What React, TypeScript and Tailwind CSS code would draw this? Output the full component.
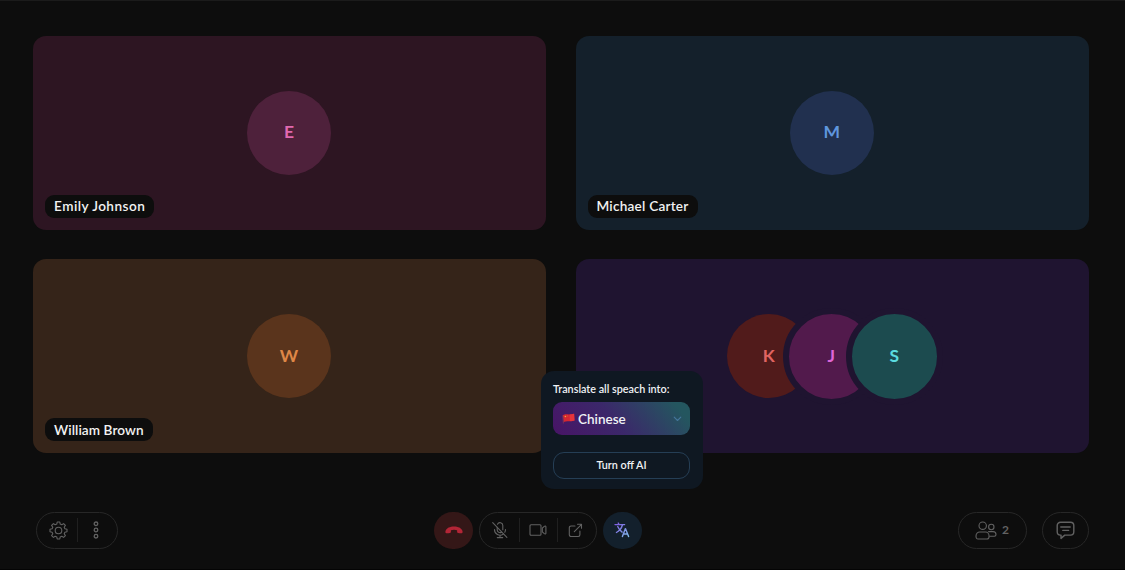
import React from 'react';
import clsx from 'clsx';

interface TileProps {
  name?: string;
  labelClassName?: string;
  className: string;
  children: React.ReactNode;
}

const Tile: React.FC<TileProps> = ({ name, labelClassName, className, children }) => (
  <div
    className={clsx(
      'relative flex items-center justify-center rounded-[13px] pr-px pb-[0.5px]',
      className
    )}
  >
    {children}
    {name && (
      <span
        className={clsx(
          'absolute bottom-3 left-3 flex h-[23px] items-center rounded-[9px] bg-[#0d0d0d] pl-[9px] text-[13.6px] font-semibold whitespace-nowrap text-[#f2f2f2]',
          labelClassName
        )}
      >
        {name}
      </span>
    )}
  </div>
);

interface AvatarProps {
  letter: string;
  className: string;
}

const Avatar: React.FC<AvatarProps> = ({ letter, className }) => (
  <div
    className={clsx(
      'flex shrink-0 items-center justify-center rounded-full pb-px text-[17.5px] font-bold',
      className
    )}
  >
    {letter}
  </div>
);

const Divider: React.FC = () => <span className="h-6 w-px bg-[#202020]" />;

const iconProps = {
  fill: 'none',
  stroke: 'currentColor',
  strokeWidth: 1.1,
  strokeLinecap: 'round' as const,
  strokeLinejoin: 'round' as const,
};

const GearIcon: React.FC = () => (
  <svg width="19" height="19" viewBox="0 0 19 19" {...iconProps}>
    <circle cx="9.5" cy="9.5" r="3.3" />
    <path d="M8.2 1h2.6l.4 2.1 1.6.7 1.8-1.2 1.8 1.8-1.2 1.8.7 1.6 2.1.4v2.6l-2.1.4-.7 1.6 1.2 1.8-1.8 1.8-1.8-1.2-1.6.7-.4 2.1H8.2l-.4-2.1-1.6-.7-1.8 1.2-1.8-1.8 1.2-1.8-.7-1.6-2.1-.4V8.2l2.1-.4.7-1.6-1.2-1.8 1.8-1.8 1.8 1.2 1.6-.7z" />
  </svg>
);

const DotsIcon: React.FC = () => (
  <svg width="6" height="18" viewBox="0 0 6 18" {...iconProps} strokeWidth={1.3}>
    <circle cx="3" cy="2.8" r="1.8" />
    <circle cx="3" cy="9" r="1.8" />
    <circle cx="3" cy="15.2" r="1.8" />
  </svg>
);

const HangUpIcon: React.FC = () => (
  <svg width="18" height="8" viewBox="0 0 18 8" fill="currentColor">
    <path d="M.6 4.7C1.6 2.1 4.9.5 9 .5s7.4 1.6 8.4 4.2c.4 1.1.2 2.4-.7 2.6-.9.2-2.7-.1-3.6-.4-.8-.3-1-.8-1-1.500V4.2C10.2 3.5 7.8 3.5 5.9 4.2v1.2c0 .7-.2 1.2-1 1.5-.9.3-2.7.6-3.6.4C.4 7.1.2 5.8.6 4.7z" />
  </svg>
);

const MicOffIcon: React.FC = () => (
  <svg width="18" height="18" viewBox="0 0 18 18" {...iconProps}>
    <path d="M1.7 1.7l14.2 14.6" />
    <path d="M6.2 6.3v2.5a2.8 2.8 0 0 0 4.3 2.4M6.5 3.2a2.8 2.8 0 0 1 5.3 1.2v4.4" />
    <path d="M3.5 8.5a5.5 5.5 0 0 0 8.8 4.6M14.5 8.5a5.5 5.5 0 0 1-.7 2.7M9 14.2v2.3M6.3 16.6h5.4" />
  </svg>
);

const VideoIcon: React.FC = () => (
  <svg width="18" height="14" viewBox="0 0 18 14" {...iconProps}>
    <rect x="1" y="1.7" width="11" height="10.6" rx="1" />
    <path d="M13.3 5.2l2-1.9c.7-.6 1.6-.3 1.6.5v6.4c0 .8-.9 1.1-1.6.5l-2-1.9z" />
  </svg>
);

const ShareIcon: React.FC = () => (
  <svg width="15" height="15" viewBox="0 0 15 15" {...iconProps}>
    <path d="M7 3H3a1.7 1.7 0 0 0-1.7 1.7v7.1A1.7 1.7 0 0 0 3 13.5h7.2a1.7 1.7 0 0 0 1.7-1.7V8" />
    <path d="M6.3 8.6l7-7M9.5 1.3h4v4" />
  </svg>
);

const TranslateIcon: React.FC = () => (
  <svg width="16" height="16" viewBox="0 0 16 16" {...iconProps} strokeWidth={1.4}>
    <defs>
      <linearGradient id="translate" x1="0" y1="0" x2="16" y2="16" gradientUnits="userSpaceOnUse">
        <stop stopColor="#7f50dc" />
        <stop offset="1" stopColor="#83c6ee" />
      </linearGradient>
    </defs>
    <g stroke="url(#translate)">
      <path d="M1 2.6h9.6M4.2 1l.9 1.5M8.5 2.8C7.6 6.2 5.2 9 2.4 10.5M3.7 4.6c1.1 2.6 2.7 4.4 4.4 5.5" />
      <path d="M8.4 14.6l3-8 3.2 8M9.4 12h4.2" />
    </g>
  </svg>
);

const PeopleIcon: React.FC = () => (
  <svg width="22" height="19" viewBox="0 0 22 19" {...iconProps}>
    <circle cx="7.7" cy="4.7" r="3.7" />
    <path d="M4.8 11h5.8c2 0 3.5 1.9 3.5 4.2 0 1.6-.6 2.8-2.1 2.8H3.1C1.6 18 1 16.8 1 15.2 1 12.9 2.7 11 4.8 11z" />
    <circle cx="16.3" cy="6" r="2.7" />
    <path d="M13.6 10.6h4.5c1.7 0 2.9 1.3 2.9 3 0 1-.5 1.7-1.6 1.7h-4.6" />
  </svg>
);

const ChatIcon: React.FC = () => (
  <svg width="19" height="19" viewBox="0 0 19 19" {...iconProps} strokeWidth={1.4}>
    <path d="M4.5 1.3h10a3.3 3.3 0 0 1 3.3 3.3v6.2a3.3 3.3 0 0 1-3.3 3.3H8.8L5 17.4v-3.3h-.5a3.3 3.3 0 0 1-3.3-3.3V4.6a3.3 3.3 0 0 1 3.3-3.3z" />
    <path d="M4.8 6h9.4M6.8 9.4h5.8" />
  </svg>
);

const FlagIcon: React.FC = () => (
  <svg width="13" height="11" viewBox="0 0 13 11">
    <path d="M.9 2.3C3.4.3 6.8 2.4 12.1.8l.4 6.7C8.3 9.2 5 7.2 1.7 9z" fill="#d52732" />
    <path d="M7.5 1.6l.4 6.5c1.4.1 2.8 0 4.6-.6L12.1.8c-1.7.5-3.2.7-4.6.8z" fill="#e5353c" />
    <path d="M.7 2.3l.7 8.2" stroke="#883c58" strokeWidth=".7" />
    <circle cx="3.4" cy="3.5" r=".8" fill="#f1a53b" />
    <circle cx="5.3" cy="2.9" r=".35" fill="#f1a53b" />
  </svg>
);

const TranslatePopup: React.FC = () => (
  <div className="absolute top-[370px] left-[541px] flex h-[118px] w-[162px] flex-col rounded-[13px] bg-[#0f1822] px-3 pt-[10px] text-[#f0f2f5]">
    <p className="h-[14px] text-[10.8px] leading-[15px] font-semibold whitespace-nowrap">
      Translate all speach into:
    </p>
    <button className="mt-[7px] flex h-[33px] w-[137px] shrink-0 items-center rounded-[9px] bg-linear-[50deg,#481466,#3b286a_45%,#24565f_90%] pr-2 pl-[9px]">
      <FlagIcon />
      <span className="ml-[3px] pt-[2px] text-[13.5px] font-semibold">Chinese</span>
      <svg className="mt-px ml-auto text-[#45769b]" width="9" height="6" viewBox="0 0 9 6" {...iconProps}>
        <path d="M1.2 1.2l3.3 3.3 3.3-3.3" />
      </svg>
    </button>
    <button className="mt-[17px] flex h-[27px] w-[137px] shrink-0 items-center justify-center rounded-[11px] border border-[#253e55] text-[10.8px] font-semibold">
      Turn off AI
    </button>
  </div>
);

const App: React.FC = () => {
  return (
    <div className="relative flex h-[570px] w-[1125px] flex-col overflow-hidden border-t border-[#1b1b1b] bg-[#0d0d0d] px-[33px] pt-[35px] font-['Lato',sans-serif]">
      <div className="grid w-[1056px] grid-cols-[513px_513.5px] grid-rows-[194px_194px] gap-x-[29.5px] gap-y-[29.4px]">
        <Tile name="Emily Johnson" labelClassName="w-[109px] tracking-[0.46px]" className="bg-[#2d1522]">
          <Avatar letter="E" className="size-[84px] bg-[#4e213b] text-[#e069b0]" />
        </Tile>
        <Tile name="Michael Carter" labelClassName="w-[110px] tracking-[0.22px]" className="bg-[#14202b]">
          <Avatar letter="M" className="size-[84px] bg-[#21304f] text-[#5f96de]" />
        </Tile>
        <Tile name="William Brown" labelClassName="w-[108px] tracking-[0.08px]" className="bg-[#352419]">
          <Avatar letter="W" className="size-[84px] bg-[#5a341c] text-[#df8747]" />
        </Tile>
        <Tile className="bg-[#1f1430]">
          <Avatar letter="K" className="size-[84px] bg-[#511b1b] text-[#e06462]" />
          <Avatar
            letter="J"
            className="z-10 -ml-7 size-[97px] border-6 border-[#1f1430] bg-[#521a4c] text-[#df65d8]"
          />
          <Avatar
            letter="S"
            className="z-20 -mr-[6px] -ml-[34px] size-[97px] border-6 border-[#1f1430] bg-[#1c4b4f] text-[#5bdce0]"
          />
        </Tile>
      </div>

      <div className="mt-[58.6px] ml-[3px] flex h-[37px] w-[1053px] shrink-0 items-center text-[#626262]">
        <div className="flex h-full w-[82px] items-center rounded-full border border-[#272727]">
          <button className="flex w-[40px] justify-center pl-[3px]"><GearIcon /></button>
          <Divider />
          <button className="flex w-[37px] justify-center pr-px"><DotsIcon /></button>
        </div>

        <div className="ml-[316px] flex h-full items-center gap-[6px]">
          <button className="flex h-full w-[39px] items-center justify-center rounded-full bg-[#341717] text-[#b32536]">
            <HangUpIcon />
          </button>
          <div className="flex h-full w-[118px] items-center rounded-full border border-[#272727]">
            <button className="flex w-[39px] justify-center pl-px"><MicOffIcon /></button>
            <Divider />
            <button className="flex w-[37px] justify-center pr-[2px]"><VideoIcon /></button>
            <Divider />
            <button className="flex w-[37px] justify-center pr-[2px]"><ShareIcon /></button>
          </div>
          <button className="flex h-full w-[39px] items-center justify-center rounded-full bg-[#13202c] pr-[2px]">
            <TranslateIcon />
          </button>
        </div>

        <div className="ml-auto flex h-full gap-[15px]">
          <button className="flex h-full w-[69px] items-center justify-center gap-[5px] rounded-full border border-[#272727] pr-px">
            <PeopleIcon />
            <span className="text-[12px] font-bold">2</span>
          </button>
          <button className="flex h-full w-[47px] items-center justify-center rounded-full border border-[#272727] pr-px">
            <ChatIcon />
          </button>
        </div>
      </div>

      <div className="-mx-[33px] mt-auto h-px shrink-0 bg-[#040404]" />

      <TranslatePopup />
    </div>
  );
};

export default App;
